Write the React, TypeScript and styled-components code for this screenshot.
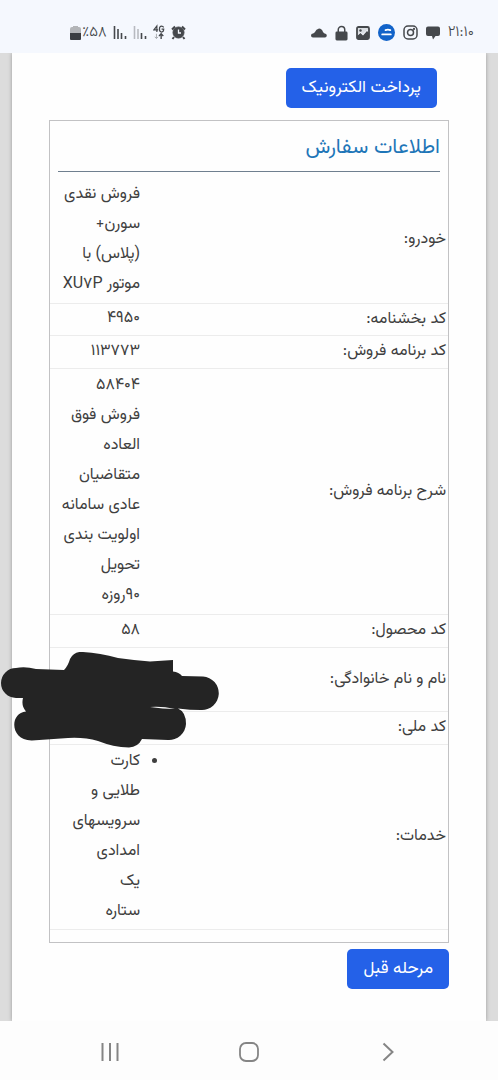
import React from "react";
import styled, { createGlobalStyle } from "styled-components";

const GlobalStyle = createGlobalStyle`
  * { box-sizing: border-box; }
  body {
    margin: 0;
    background: #fdfdfd;
    color: #3f3f3f;
    font-family: Vazirmatn, sans-serif;
    font-size: 16px;
    font-weight: 400;
    line-height: 30px;
  }
`;

const Screen = styled.div`
  display: flex;
  flex-direction: column;
  min-height: 100vh;
`;

const StatusBar = styled.header`
  display: flex;
  align-items: center;
  justify-content: space-between;
  height: 53px;
  padding: 12px 24px 0 70px;
  background: #f5f8fe;
  color: #45484c;
  direction: ltr;
`;

const StatusGroup = styled.div<{ $gap: number }>`
  display: flex;
  align-items: center;
  gap: ${(p) => p.$gap}px;
  svg { display: block; }
`;

const StatusText = styled.span`
  font-size: 15px;
  font-weight: 300;
  line-height: 18px;
`;

const Battery = styled.div`
  display: flex;
  align-items: center;
  gap: 1px;
`;

const Backdrop = styled.main`
  display: flex;
  flex: 1;
  padding: 0 12px;
  background: #dcdcdc;
  overflow: hidden;
`;

const Sheet = styled.div`
  flex: 1;
  min-width: 0;
  padding: 15px 37px 32px;
  background: #fefefe;
  box-shadow: 0 0 4px #999;
`;

const Button = styled.button`
  display: block;
  height: 40px;
  padding: 0 16px;
  border: 0;
  border-radius: 5px;
  background: #2461e8;
  color: #fff;
  font: inherit;
  font-size: 17px;
  white-space: nowrap;
`;

const PayRow = styled.div`
  padding: 0 12px 12px;
`;

const Panel = styled.section`
  margin-bottom: 6px;
  padding-bottom: 12px;
  border: 1px solid #c2c2c4;
`;

const Title = styled.h2`
  height: 51px;
  margin: 0 8px 5px;
  padding-top: 12px;
  border-bottom: 1px solid #6f7f8f;
  color: #1f76b8;
  font-size: 21px;
  font-weight: 400;
`;

const Table = styled.table`
  width: 100%;
  border-collapse: collapse;
`;

const Row = styled.tr<{ $height: number }>`
  height: ${(p) => p.$height}px;
  border-bottom: 1px solid #ececec;
`;

const Label = styled.th`
  padding: 1px 2px 0 0;
  font-weight: inherit;
  text-align: right;
  vertical-align: middle;
`;

const Value = styled.td`
  position: relative;
  width: 90px;
  padding: 0;
  vertical-align: middle;
  white-space: nowrap;
`;

const Line = styled.span`
  display: block;
`;

const List = styled.ul`
  margin: 0;
  padding: 0;
`;

const Scribble = styled.svg`
  position: absolute;
  top: 4px;
  left: -50px;
`;

const NavBar = styled.nav`
  display: flex;
  align-items: center;
  justify-content: space-around;
  height: 59px;
  padding: 2px 41px 0;
  direction: ltr;
`;

const NavButton = styled.button`
  display: flex;
  justify-content: center;
  width: 60px;
  padding: 0;
  border: 0;
  background: none;
  color: #858585;
`;

type Entry = { label: string; height: number; lines: string[]; list?: boolean; hidden?: boolean };

const entries: Entry[] = [
  { label: "خودرو:", height: 126, lines: ["فروش نقدی", "سورن+", "(پلاس) با", "موتور XU۷P"] },
  { label: "کد بخشنامه:", height: 32, lines: ["۴۹۵۰"] },
  { label: "کد برنامه فروش:", height: 33, lines: ["۱۱۳۷۷۳"] },
  {
    label: "شرح برنامه فروش:",
    height: 246,
    lines: ["۵۸۴۰۴", "فروش فوق", "العاده", "متقاضیان", "عادی سامانه", "اولویت بندی", "تحویل", "۹۰روزه"],
  },
  { label: "کد محصول:", height: 33, lines: ["۵۸"] },
  { label: "نام و نام خانوادگی:", height: 64, lines: [], hidden: true },
  { label: "کد ملی:", height: 33, lines: [] },
  {
    label: "خدمات:",
    height: 185,
    list: true,
    lines: ["کارت", "طلایی و", "سرویسهای", "امدادی", "یک", "ستاره"],
  },
];

const Signal = ({ faint }: { faint?: boolean }) => (
  <svg width="14" height="15" viewBox="0 0 14 15" fill="none" stroke="currentColor" strokeWidth="1.600">
    <path d="M1.500 1v13" opacity={faint ? 0.35 : 1} />
    <path d="M5 4v10" opacity={faint ? 0.35 : 1} />
    <path d="M8.500 8v6M12.500 11v3" />
  </svg>
);

export default function App() {
  return (
    <Screen dir="rtl" lang="fa">
      <GlobalStyle />
      <StatusBar>
        <StatusGroup $gap={6}>
          <Battery>
            <svg width="11" height="16" viewBox="0 0 11 16">
              <path d="M3 2V1h5v1h1q2 0 2 2v4H0V4q0-2 2-2z" fill="#b3b5b8" />
              <path d="M0 8h11v6q0 1-1 1H1q-1 0-1-1z" fill="#3b3e42" />
            </svg>
            <StatusText>٪۵۸</StatusText>
          </Battery>
          <Signal />
          <Signal faint />
          <svg width="12" height="17" viewBox="0 0 14 17" fill="none" stroke="currentColor">
            <path d="M4.500 8V1L1 5.500h5M12.500 2.500Q11.500 1 10 1 7.500 1 7.500 4.500T10 8q2.500 0 2.500-3.500H10" strokeWidth="1.400" />
            <path d="M4 10v5M2 13.500l2 2 2-2" opacity=".5" />
            <path d="M9.500 16v-5M7 12.500l2.500-2.500 2.500 2.500" strokeWidth="1.600" />
          </svg>
          <svg width="15" height="15" viewBox="0 0 15 15" fill="none" stroke="currentColor">
            <circle cx="7.500" cy="7.500" r="5.500" fill="currentColor" />
            <path d="M1 4.500 4 1.500M14 4.500l-3-3M3 12l-1.500 2M12 12l1.500 2" strokeWidth="2" />
            <path d="M7.500 4.500v3.500H10" stroke="#f5f8fe" strokeWidth="1.300" />
          </svg>
        </StatusGroup>
        <StatusGroup $gap={8}>
          <svg width="16" height="10" viewBox="0 0 16 10">
            <path d="M2 9.500a2 2 0 0 1 0-4Q3 5 4 4q1-3 4-3.500 3 0 4 3.500 1 1.500 2.500 1.800a1.900 1.900 0 0 1-.5 3.700z" fill="currentColor" />
          </svg>
          <svg width="13" height="16" viewBox="0 0 14 16">
            <rect x=".5" y="6.500" width="13" height="9.500" rx="1.500" fill="currentColor" />
            <path d="M3.500 7V4.500a3.500 3.500 0 0 1 7 0V7" fill="none" stroke="currentColor" strokeWidth="1.600" />
          </svg>
          <svg width="14" height="14" viewBox="0 0 14 14">
            <rect x="1" y="1" width="12" height="12" rx="1.500" fill="none" stroke="currentColor" strokeWidth="1.800" />
            <path d="M1 1h12v4.500L11 4 7 8 4.500 6 1 9z" fill="currentColor" opacity=".15" />
            <path d="M1 10 4.500 7 7 9.500 11 5l2 2v6H1z" fill="currentColor" />
            <circle cx="4.500" cy="4.500" r="1.200" fill="currentColor" />
          </svg>
          <svg width="17" height="17" viewBox="0 0 18 18">
            <circle cx="9" cy="9" r="9" fill="#1263c9" />
            <path d="M8 6.500q2.500-1 5 0M4.500 11h9" fill="none" stroke="#fff" strokeWidth="2" strokeLinecap="round" />
          </svg>
          <svg width="15" height="15" viewBox="0 0 15 15" fill="none" stroke="currentColor" strokeWidth="1.500">
            <rect x="1" y="1" width="13" height="13" rx="4" />
            <circle cx="7.500" cy="7.500" r="3" />
            <circle cx="11" cy="4" r=".4" />
          </svg>
          <svg width="14" height="14" viewBox="0 0 14 14">
            <path d="M2 .5h10q2 0 2 2V8q0 2-2 2H9.500L7 13.500 6 10H2Q0 10 0 8V2.500Q0 .5 2 .5z" fill="currentColor" />
          </svg>
          <StatusText>۲۱:۱۰</StatusText>
        </StatusGroup>
      </StatusBar>

      <Backdrop>
        <Sheet>
          <PayRow>
            <Button type="button">پرداخت الکترونیک</Button>
          </PayRow>
          <Panel>
            <Title>اطلاعات سفارش</Title>
            <Table>
              <tbody>
                {entries.map((entry) => (
                  <Row key={entry.label} $height={entry.height}>
                    <Label scope="row">{entry.label}</Label>
                    <Value>
                      {entry.list ? (
                        <List>
                          <li>
                            {entry.lines.map((line) => (
                              <Line key={line}>{line}</Line>
                            ))}
                          </li>
                        </List>
                      ) : (
                        entry.lines.map((line) => <Line key={line}>{line}</Line>)
                      )}
                      {entry.hidden && (
                        <Scribble width="219" height="97" viewBox="0 0 219 97" aria-hidden="true">
                          <path
                            d="M16 46A15 15 0 0 1 16 16Q25 14 36 17L64 18Q68 14 70 7 74-1 83 0 100 1 118 6 134 8 150 9.500L173 8V19.500Q179 20 182 24L203 24.500A16.500 16.500 0 0 1 201 58Q190 58 178 56.500 186 60 186 72A17 17 0 0 1 168 88L142 87Q138 95 129 95.500 113 95 98 89 84 85 68 86L32 88.500C10 89 9 61 26 59.500Q21 54 23 46Z"
                            fill="#242424"
                          />
                          <path d="M150 55q12-1 25 2-12 0-25-2z" fill="#fefefe" />
                        </Scribble>
                      )}
                    </Value>
                  </Row>
                ))}
              </tbody>
            </Table>
          </Panel>
          <Button type="button">مرحله قبل</Button>
        </Sheet>
      </Backdrop>

      <NavBar>
        <NavButton type="button" aria-label="برنامه‌های اخیر">
          <svg width="20" height="20" viewBox="0 0 20 20" stroke="currentColor" strokeWidth="2">
            <path d="M2.500 1v18M10 1v18M17.500 1v18" />
          </svg>
        </NavButton>
        <NavButton type="button" aria-label="خانه">
          <svg width="20" height="20" viewBox="0 0 20 20" fill="none" stroke="currentColor" strokeWidth="1.800">
            <rect x="1" y="1" width="18" height="18" rx="6" />
          </svg>
        </NavButton>
        <NavButton type="button" aria-label="بازگشت">
          <svg width="12" height="20" viewBox="0 0 12 20" fill="none" stroke="currentColor" strokeWidth="2">
            <path d="M1.500 1.500 10.500 10l-9 8.500" />
          </svg>
        </NavButton>
      </NavBar>
    </Screen>
  );
}
